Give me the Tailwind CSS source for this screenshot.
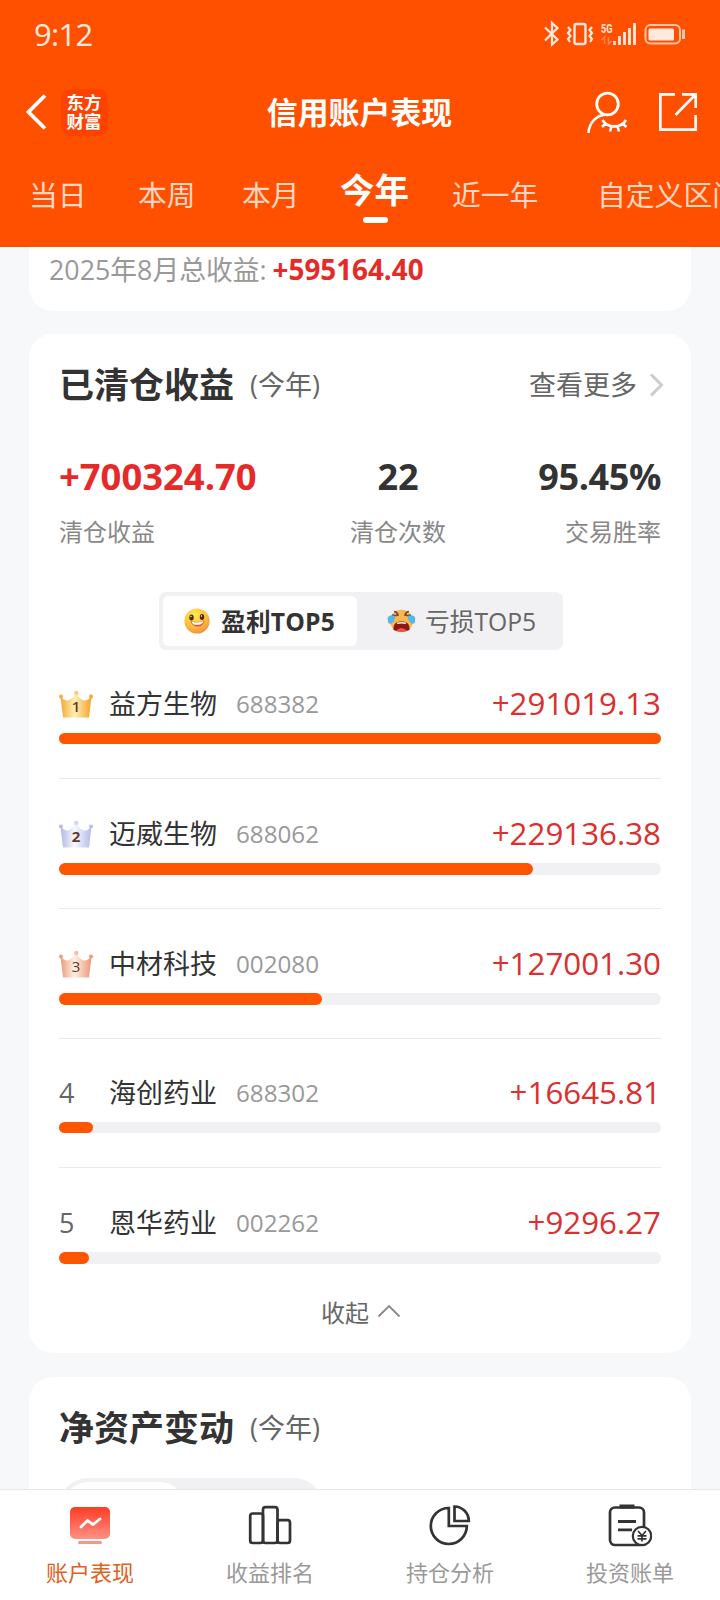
<!DOCTYPE html>
<html lang="zh-CN">
<head>
<meta charset="utf-8">
<title>信用账户表现</title>
<script src="https://cdn.jsdelivr.net/npm/@tailwindcss/browser@4"></script>
</head>
<body class="w-[720px] h-[1600px] overflow-hidden bg-[#f7f8fa] flex flex-col font-['Open_Sans','Noto_Sans_CJK_SC',sans-serif] text-[#333] whitespace-nowrap">

<header class="h-[247px] shrink-0 bg-[#ff5000] text-white flex flex-col overflow-hidden">
  <div class="h-[68px] flex items-center justify-between pl-[34px] pr-[34px]">
    <span class="text-[31px] leading-[66px] -mt-[1px] font-medium tracking-[-0.7px] text-[#ffe9df]">9:12</span>
    <svg class="w-[144px] h-[28px]" viewBox="542 20 144 28" fill="none" stroke="#ffe9df" stroke-width="2">
      <path d="M545 27.500l12.500 12-5.500 5V23l5.500 5-12.500 12.500" stroke-width="2.200"/>
      <rect x="574.500" y="24" width="11" height="20" rx="2" stroke-width="2.400"/>
      <path d="M568 27l2.500 3-2.500 3 2.500 3-2.500 3 2 3M592 27l-2.500 3 2.500 3-2.500 3 2.500 3-2 3" stroke-width="2.200"/>
      <text x="601" y="33" font-size="13" font-weight="700" font-family="Roboto" fill="#ffe9df" stroke="none" textLength="11.500" lengthAdjust="spacingAndGlyphs">5G</text>
      <path d="M604.500 44v-7l-3 3M608.500 37v7l3-3" stroke="#ff8350" stroke-width="1.500"/>
      <path d="M614.500 45v-4M619.500 45v-9M624.500 45V32M629.500 45V28M634.500 45V23" stroke-width="2.800"/>
      <rect x="645.500" y="25" width="34.500" height="18.500" rx="5" stroke="#ffc4a8"/>
      <rect x="648.500" y="28.500" width="25.500" height="12" rx="1.500" fill="#ffe9df" stroke="none"/>
      <path d="M683.500 29.500v9.500" stroke-width="3" stroke="#ffc4a8"/>
    </svg>
  </div>
  <div class="h-[88px] grid grid-cols-[1fr_auto_1fr] items-center pl-[25px] pr-[21px]">
    <div class="flex items-center gap-[14px]">
      <svg class="w-[22px] h-[36px]" viewBox="0 0 22 36" fill="none" stroke="#fff" stroke-width="3.800"><path d="M20 1.500L3.500 18 20 34.500"/></svg>
      <div class="size-[47px] rounded-[9px] bg-[#ff4200] flex items-center justify-center font-['Noto_Sans_CJK_SC',sans-serif] font-bold text-[17.500px] leading-[19.500px]"><span class="w-[36px] -mt-[2px] whitespace-normal">东方财富</span></div>
    </div>
    <h1 class="text-[30.900px] leading-[40px] font-bold -ml-[5px]">信用账户表现</h1>
    <div class="flex items-center justify-end gap-[30px]">
      <svg class="w-[42px] h-[42px]" viewBox="587 91 42 42" fill="none" stroke="#fff" stroke-width="2.800">
        <circle cx="607.500" cy="104" r="10.800"/>
        <path d="M588.500 133c.5-10 8-18 17-18.300M602.500 120c5 8.500 18.500 8.500 23.500 0M605.500 123.500l-3.500 3.500M611.500 126.500l-1.500 5M617.500 126.500l1.500 5M622.500 123.500l4 3.500" stroke-width="2.600"/>
      </svg>
      <svg class="w-[40px] h-[40px]" viewBox="659 92 40 40" fill="none" stroke="#fff" stroke-width="2.700">
        <path d="M675 94.400h-14.700v35.300h35.400V115M682 94.400h13.700V108M695.500 94.500L675.500 115"/>
      </svg>
    </div>
  </div>
  <nav class="h-[77px] pl-[29px] flex items-center text-[28.800px] leading-[40px] text-[#ffd6c3] overflow-hidden">
    <span class="w-[109px] shrink-0">当日</span>
    <span class="w-[104px] shrink-0">本周</span>
    <span class="w-[98px] shrink-0">本月</span>
    <span class="w-[112px] shrink-0 relative text-white font-bold text-[34.500px] -mt-[10px]">今年<i class="absolute left-[23px] top-[47px] w-[25px] h-[6px] rounded-full bg-white"></i></span>
    <span class="w-[145px] shrink-0">近一年</span>
    <span class="shrink-0">自定义区间</span>
  </nav>
</header>

<main class="flex-1 min-h-0 overflow-hidden px-[29px] flex flex-col">
  <section class="h-[64px] shrink-0 bg-white rounded-b-[24px] pl-[20px] text-[26.800px] leading-[44px] text-[#999]">2025年8月总收益: <b class="text-[27.800px] text-[#e62a2a] -ml-[1px]">+595164.40</b></section>

  <section class="mt-[23px] h-[1019px] shrink-0 bg-white rounded-[24px] px-[30px] flex flex-col">
    <div class="h-[98px] pt-[4px] flex items-center">
      <h2 class="text-[35px] leading-[44px] font-bold">已清仓收益</h2>
      <span class="ml-[16px] text-[27px] text-[#666]">(今年)</span>
      <span class="ml-auto text-[27px] text-[#666]">查看更多</span>
      <svg class="ml-[12px] -mr-[3px] w-[15px] h-[24px]" viewBox="0 0 15 24" fill="none" stroke="#ccc" stroke-width="3"><path d="M2 1.500L12.500 12 2 22.500"/></svg>
    </div>
    <div class="h-[160px] pt-[22px] flex justify-between">
      <div class="w-[204px]"><div class="text-[36.400px] leading-[45px] mb-[16px] font-bold text-[#e62a2a]">+700324.70</div><div class="text-[24px] leading-[34px] text-[#888]">清仓收益</div></div>
      <div class="w-[270px] text-center"><div class="text-[36px] leading-[45px] mb-[16px] font-bold">22</div><div class="text-[24px] leading-[34px] text-[#888]">清仓次数</div></div>
      <div class="w-[128px] flex flex-col items-end"><div class="text-[36px] leading-[45px] mb-[16px] font-bold tracking-[-0.4px]">95.45%</div><div class="text-[24px] leading-[34px] text-[#888]">交易胜率</div></div>
    </div>
    <div class="ml-[100px] w-[404px] h-[58px] rounded-[7px] bg-[#f1f1f4] p-1 flex text-[24.700px] leading-[50px]">
      <div class="w-[194px] rounded-[6px] bg-white flex items-center pl-[21px] pt-[1px] font-bold tracking-[0.2px]">
        <svg class="w-[26px] h-[26px] mr-[11px] -mt-[2px]" viewBox="0 0 26 26">
          <defs><radialGradient id="face" cx=".4" cy=".25" r=".8"><stop offset="0" stop-color="#ffea50"/><stop offset=".6" stop-color="#fdbf3c"/><stop offset="1" stop-color="#f08a3c"/></radialGradient></defs>
          <circle cx="13" cy="13" r="12.600" fill="url(#face)"/>
          <ellipse cx="7.500" cy="9.500" rx="2.200" ry="2.900" fill="#4b2a13"/><ellipse cx="18" cy="9" rx="2.200" ry="2.900" fill="#4b2a13"/>
          <circle cx="7" cy="8.500" r=".7" fill="#fff"/><circle cx="17.500" cy="8" r=".7" fill="#fff"/>
          <path d="M6.500 13q6.500 2.500 14-.8c-.8 5-4 6.300-6.700 6.300S7.300 17 6.500 13z" fill="#d0564a"/><path d="M7.500 13.600q6 2 12-.6-.8 3-2.500 3.300-4 1-7.500.2-1.500-.8-2-2.900z" fill="#fff"/>
        </svg>盈利TOP5
      </div>
      <div class="flex items-center pl-[30px] pt-[1px] text-[#666]">
        <svg class="w-[29px] h-[24px] mr-[9px] -mt-[2px]" viewBox="0 0 29 24">
          <ellipse cx="14.500" cy="12" rx="11.500" ry="11.300" fill="#f9b84d"/>
          <path d="M7 2.500q3 0 4 3.500-3 1-6 0M22 2.500q-3 0-4 3.500 3 1 6 0" fill="none" stroke="#7b4a2c" stroke-width="1.700"/>
          <path d="M6 6.500C1 6 0 9 1 11c-1 4 3 5 4.500 2.500C7.500 12 8 9 8.500 7zM23 6.500c5-.5 6 2.500 5 4.500 1 4-3 5-4.500 2.500C21.500 12 21 9 20.500 7z" fill="#56b4ef"/>
          <path d="M6.500 21c-.5-6 2.500-8.500 8-8.500s8.500 2.500 8 8.500q-8 3-16 0z" fill="#8c1713"/>
          <path d="M9.500 13.700q5-1.500 10 0l-1 1.200q-4-.7-8 0z" fill="#fff3e8"/><path d="M9 21.500q5.500-5 11 0-5.500 1.800-11 0z" fill="#ef5148"/>
        </svg>亏损TOP5
      </div>
    </div>

    <ul class="pt-[29px] text-[27px]">
      <li class="h-[130px]">
        <div class="h-[50px] flex items-center">
          <svg class="w-[34px] h-[28px] mr-[16px]" viewBox="0 0 34 28"><defs><linearGradient id="gold" gradientUnits="userSpaceOnUse" x1="2" x2="32" y1="0" y2="0"><stop offset="0" stop-color="#f5aa31"/><stop offset=".45" stop-color="#fff0b8"/><stop offset="1" stop-color="#f6a42c"/></linearGradient></defs><g fill="url(#gold)"><path d="M1.500 6.500Q7 12.500 11 9.500 15 7 17 3q2.500 5 6.500 7 4 2 9-3.500L30 27.500H4z"/><circle cx="2" cy="6.500" r="2"/><circle cx="32" cy="6.500" r="2"/></g><circle cx="17.300" cy="3" r="2.300" fill="#f9cd7d"/><text x="17" y="22" text-anchor="middle" font-family="Open Sans" font-weight="600" font-size="15" fill="#673b20">1</text></svg>
          <span>益方生物</span><span class="ml-[19px] text-[24.200px] text-[#999]">688382</span><span class="ml-auto -mt-[2px] text-[31.300px] text-[#d93030]">+291019.13</span>
        </div>
        <div class="mt-[4px] h-[11px] rounded-full bg-[#f1f1f4]"><div class="h-full rounded-full bg-[#ff5500]" style="width:100%"></div></div>
        <div class="mt-[34px] h-px bg-[#eaeaea]"></div>
      </li>
      <li class="h-[130px]">
        <div class="h-[50px] flex items-center">
          <svg class="w-[34px] h-[28px] mr-[16px]" viewBox="0 0 34 28"><defs><linearGradient id="silver" gradientUnits="userSpaceOnUse" x1="2" x2="32" y1="0" y2="0"><stop offset="0" stop-color="#b3b9e4"/><stop offset=".45" stop-color="#f7f8ff"/><stop offset="1" stop-color="#b5bcec"/></linearGradient></defs><g fill="url(#silver)"><path d="M1.500 6.500Q7 12.500 11 9.500 15 7 17 3q2.500 5 6.500 7 4 2 9-3.500L30 27.500H4z"/><circle cx="2" cy="6.500" r="2"/><circle cx="32" cy="6.500" r="2"/></g><circle cx="17.300" cy="3" r="2.300" fill="#d3d8f3"/><text x="17" y="22" text-anchor="middle" font-family="Open Sans" font-weight="700" font-size="15" fill="#673b20">2</text></svg>
          <span>迈威生物</span><span class="ml-[19px] text-[24.200px] text-[#999]">688062</span><span class="ml-auto -mt-[2px] text-[31.300px] text-[#d93030]">+229136.38</span>
        </div>
        <div class="mt-[4px] h-[12px] rounded-full bg-[#f1f1f4]"><div class="h-full rounded-full bg-[#ff5500]" style="width:78.740%"></div></div>
        <div class="mt-[33px] h-px bg-[#eaeaea]"></div>
      </li>
      <li class="h-[129px]">
        <div class="h-[50px] flex items-center">
          <svg class="w-[34px] h-[28px] mr-[16px]" viewBox="0 0 34 28"><defs><linearGradient id="bronze" gradientUnits="userSpaceOnUse" x1="2" x2="32" y1="0" y2="0"><stop offset="0" stop-color="#ee9c7c"/><stop offset=".45" stop-color="#fff0e6"/><stop offset="1" stop-color="#ee9878"/></linearGradient></defs><g fill="url(#bronze)"><path d="M1.500 6.500Q7 12.500 11 9.500 15 7 17 3q2.500 5 6.500 7 4 2 9-3.500L30 27.500H4z"/><circle cx="2" cy="6.500" r="2"/><circle cx="32" cy="6.500" r="2"/></g><circle cx="17.300" cy="3" r="2.300" fill="#f5bfa7"/><text x="17" y="22" text-anchor="middle" font-family="Open Sans" font-weight="500" font-size="15" fill="#673b20">3</text></svg>
          <span>中材科技</span><span class="ml-[19px] text-[24.200px] text-[#999]">002080</span><span class="ml-auto -mt-[2px] text-[31.300px] text-[#d93030]">+127001.30</span>
        </div>
        <div class="mt-[4px] h-[12px] rounded-full bg-[#f1f1f4]"><div class="h-full rounded-full bg-[#ff5500]" style="width:43.640%"></div></div>
        <div class="mt-[33px] h-px bg-[#eaeaea]"></div>
      </li>
      <li class="h-[130px]">
        <div class="h-[50px] flex items-center">
          <span class="w-[50px] text-[27px] text-[#666]">4</span>
          <span>海创药业</span><span class="ml-[19px] text-[24.200px] text-[#999]">688302</span><span class="ml-auto -mt-[2px] text-[31.300px] text-[#d93030]">+16645.81</span>
        </div>
        <div class="mt-[4px] h-[11px] rounded-full bg-[#f1f1f4]"><div class="h-full rounded-full bg-[#ff5500]" style="width:5.650%"></div></div>
        <div class="mt-[34px] h-px bg-[#eaeaea]"></div>
      </li>
      <li>
        <div class="h-[50px] flex items-center">
          <span class="w-[50px] text-[27px] text-[#666]">5</span>
          <span>恩华药业</span><span class="ml-[19px] text-[24.200px] text-[#999]">002262</span><span class="ml-auto -mt-[2px] text-[31.300px] text-[#d93030]">+9296.27</span>
        </div>
        <div class="mt-[4px] h-[12px] rounded-full bg-[#f1f1f4]"><div class="h-full rounded-full bg-[#ff5500]" style="width:5%"></div></div>
      </li>
    </ul>
    <div class="mt-[32px] pl-[2px] flex items-center justify-center text-[24px] leading-[34px] text-[#666]">收起<svg class="ml-[8px] -mt-[5px] w-[24px] h-[14px]" viewBox="0 0 24 14" fill="none" stroke="#888" stroke-width="1.800"><path d="M1.500 12.500L12 2l10.500 10.500"/></svg></div>
  </section>

  <section class="mt-[24px] h-[200px] shrink-0 bg-white rounded-t-[24px] px-[30px]">
    <div class="h-[101px] pt-[1px] flex items-center">
      <h2 class="text-[35px] leading-[44px] font-bold">净资产变动</h2>
      <span class="ml-[16px] text-[27px] text-[#666]">(今年)</span>
    </div>
    <div class="w-[264px] h-[58px] rounded-[29px] bg-[#f1f1f4] p-1"><div class="w-[122px] h-[50px] rounded-[25px] bg-white"></div></div>
  </section>
</main>

<footer class="h-[111px] shrink-0 border-t border-[#e8e8e8] bg-white grid grid-cols-4 text-[22px] leading-[30px] text-[#999]">
  <div class="flex flex-col items-center pt-[14px] text-[#e0601c]">
    <svg class="w-[44px] h-[44px] mb-[9px]" viewBox="68 1504 44 44"><defs><linearGradient id="scr" x2="0" y2="1"><stop offset="0" stop-color="#ff3b25"/><stop offset="1" stop-color="#ff9184"/></linearGradient></defs><rect x="70" y="1507" width="40" height="32" rx="5" fill="url(#scr)"/><path d="M81 1527l6.500-6.500 5.500 4 7-5.500" fill="none" stroke="#fff" stroke-width="2.800" stroke-linecap="round"/><rect x="78" y="1541" width="24" height="3" rx="1.500" fill="#f4978b"/></svg>
    <span>账户表现</span>
  </div>
  <div class="flex flex-col items-center pt-[14px]">
    <svg class="w-[44px] h-[44px] mb-[9px]" viewBox="248 1504 44 44" fill="none" stroke="#333" stroke-width="2.700"><rect x="250.200" y="1513.500" width="12.800" height="29.500" rx="2.500"/><rect x="263" y="1507.200" width="14.500" height="35.800" rx="2.500"/><rect x="277.500" y="1520.200" width="12.500" height="22.800" rx="2.500"/></svg>
    <span>收益排名</span>
  </div>
  <div class="flex flex-col items-center pt-[14px]">
    <svg class="w-[44px] h-[44px] mb-[9px]" viewBox="428 1504 44 44" fill="none" stroke="#333" stroke-width="2.700"><path d="M448.800 1508a18 18 0 1 0 18 18H448.800z"/><path d="M454.500 1506.500v14.500h14.300a14.500 14.500 0 0 0-14.300-14.500z"/></svg>
    <span>持仓分析</span>
  </div>
  <div class="flex flex-col items-center pt-[14px]">
    <svg class="w-[44px] h-[44px] mb-[9px]" viewBox="608 1504 44 44" fill="none" stroke="#333" stroke-width="2.700"><rect x="610" y="1507.500" width="34" height="37.500" rx="5"/><path d="M619.500 1506.500h15" stroke-width="4"/><path d="M618 1521.500h18M618 1529.800h14" stroke-width="2.800"/><circle cx="642" cy="1536" r="9.200" fill="#fff" stroke-width="2.200"/><path d="M638 1531l4 4.500 4-4.500M642 1535.500v6M637.500 1535.800h9M637.500 1538.800h9" stroke-width="1.700"/></svg>
    <span>投资账单</span>
  </div>
</footer>
</body>
</html>
